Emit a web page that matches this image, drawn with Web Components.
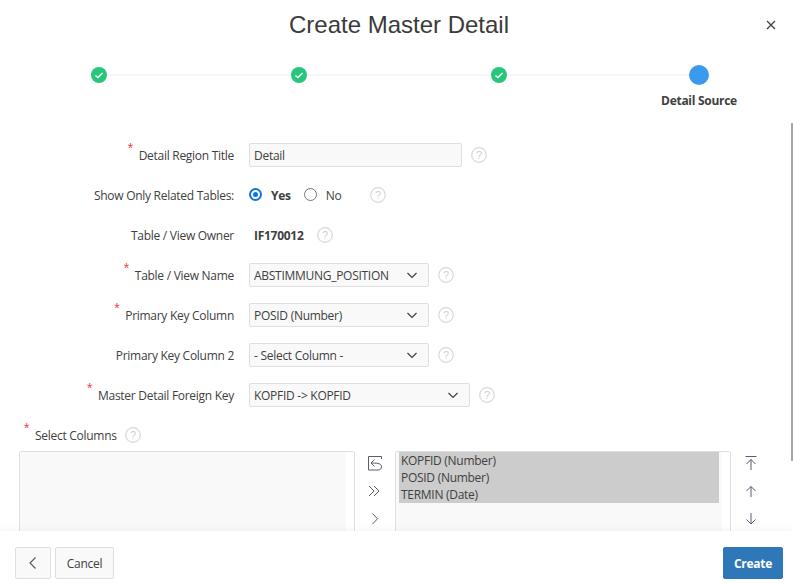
<!DOCTYPE html>
<html><head><meta charset="utf-8"><style>
html,body{margin:0;padding:0;background:#fff;height:100%;overflow:hidden}
body{font-family:"Open Sans","Noto Sans",sans-serif;color:#404040;letter-spacing:-.28px}
</style></head><body>
<wizard-dialog>
<wizard-header></wizard-header>
<form-row label="Detail Region Title" req="1" help="473"><text-box value="Detail"></text-box></form-row>
<form-row label="Show Only Related Tables:" ><radio-pair></radio-pair></form-row>
<form-row label="Table / View Owner" help="1"><b style="font-size:12px;color:#404040;padding-left:5px;margin-right:4px">IF170012</b></form-row>
<form-row label="Table / View Name" req="1" help="1"><select-box value="ABSTIMMUNG_POSITION" w="180"></select-box></form-row>
<form-row label="Primary Key Column" req="1" help="1"><select-box value="POSID (Number)" w="180"></select-box></form-row>
<form-row label="Primary Key Column 2" help="1"><select-box value="- Select Column -" w="180"></select-box></form-row>
<form-row label="Master Detail Foreign Key" req="1" help="1"><select-box value="KOPFID -&gt; KOPFID" w="221"></select-box></form-row>
<shuttle-field></shuttle-field>
<wizard-footer></wizard-footer>
</wizard-dialog>
<script>
const def=(n,html)=>{customElements.define(n,class extends HTMLElement{
 connectedCallback(){if(this.shadowRoot)return;const r=this.attachShadow({mode:'open'});r.innerHTML=html(this);}
});};
const helpIcon=`<svg width="16" height="16" viewBox="0 0 16 16" style="display:block"><circle cx="8" cy="8" r="7.3" fill="#fff" stroke="#d8d8d8" stroke-width="1.2"/><text x="8" y="12" text-anchor="middle" font-family="Liberation Sans" font-size="11" fill="#cfcfcf" letter-spacing="0">?</text></svg>`;
const chev=`<svg width="12" height="7" viewBox="0 0 12 7" style="display:block"><path d="M1.5 1l4.5 4.5L10.5 1" fill="none" stroke="#404040" stroke-width="1.2"/></svg>`;
const check=`<svg width="16" height="16" viewBox="0 0 16 16" style="display:block"><circle cx="8" cy="8" r="8" fill="#26c77a"/><path d="M4.4 8.5l2.4 2L11.6 6" fill="none" stroke="#fff" stroke-width="1.4"/></svg>`;
def('wizard-dialog',()=>`<style>
:host{display:flex;flex-direction:column;height:583px;width:793px;position:relative;overflow:hidden}
.bar{position:absolute;right:0;top:123px;width:2px;height:338px;background:#a6a6a6}
</style><slot></slot><div class="bar"></div>`);
def('wizard-header',()=>`<style>
:host{display:block;height:135px;position:relative;flex:none}
h1{margin:0;padding:10px 0 0 5px;height:30px;font:24px/30px "Liberation Sans",sans-serif;letter-spacing:0;color:#3b3b3b;text-align:center}
.x{position:absolute;left:765px;top:19px}
.w{display:grid;grid-template-columns:200px 200px 198px 20px;align-items:center;margin:25px 84px 0 91px;height:20px;background:linear-gradient(#f6f6f6,#f6f6f6) center/100% 2px no-repeat}
.cur{width:20px;height:20px;border-radius:50%;background:#3b9aef}
.lab{position:absolute;left:599px;width:200px;top:94px;text-align:center;font-size:12px;font-weight:700;color:#404040;line-height:14px}
</style><h1>Create Master Detail</h1>
<svg class="x" width="12" height="12" viewBox="0 0 12 12"><path d="M2 2l8 8M10 2l-8 8" stroke="#404040" stroke-width="1.3"/></svg>
<div class="w">${check}${check}${check}<div class="cur"></div></div>
<div class="lab">Detail Source</div>`);
def('form-row',h=>`<style>
:host{display:grid;grid-template-columns:234px auto auto 1fr;align-items:center;height:40px;flex:none}
.l{justify-self:end;font-size:12px;color:#404040;position:relative;white-space:nowrap}
.s{position:absolute;left:-11px;top:-6px;color:#f0414a;font:14px/14px "Liberation Sans",sans-serif}
.c{margin-left:15px;display:flex;align-items:center}
.h{margin-left:9px}
</style><div class="l">${h.hasAttribute('req')?'<span class="s">*</span>':''}${h.getAttribute('label')}</div>
<div class="c"><slot></slot></div>
<div class="h">${h.hasAttribute('help')?helpIcon:''}</div>`);
def('text-box',h=>`<style>
:host{display:block;width:213px;height:24px;box-sizing:border-box;border:1px solid #dfdfdf;border-radius:2px;background:#f9f9f9;font-size:12px;line-height:23px;padding-left:4px;color:#404040}
</style>${h.getAttribute('value')}`);
def('select-box',h=>`<style>
:host{display:flex;align-items:center;justify-content:space-between;width:${h.getAttribute('w')}px;height:24px;box-sizing:border-box;border:1px solid #dfdfdf;border-radius:2px;background:#f9f9f9;font-size:12px;padding:0 10px 0 4px;color:#404040;white-space:nowrap}
</style><span>${h.getAttribute('value')}</span>${chev}`);
def('radio-pair',()=>`<style>
:host{display:flex;align-items:center;font-size:12px;color:#404040}
.on,.off{display:block;width:13px;height:13px;box-sizing:border-box;border-radius:50%;margin-top:-2px}
.on{border:2px solid #0b75e6;padding:2px;background:#fff}
.on i{display:block;width:5px;height:5px;border-radius:50%;background:#0b75e6}
.off{border:1px solid #767676;margin-left:13px;background:#fff}
b{margin-left:9px}span.t{margin-left:9px}
svg{margin-left:29px}
</style><span class="on"><i></i></span><b>Yes</b><span class="off"></span><span class="t">No</span>${helpIcon}`);
const ic=p=>`<svg width="18" height="18" viewBox="0 0 18 18" style="display:block"><g fill="none" stroke="#5a5a6a" stroke-width="1">${p}</g></svg>`;
def('shuttle-field',()=>`<style>
:host{display:block;flex:none;padding:0 0 0 19px;position:relative}
.t{box-sizing:border-box;font-size:12px;color:#404040;height:36px;padding-top:4px;display:flex;align-items:center;padding-left:16px;position:relative}
.s{position:absolute;left:5px;top:6px;color:#f0414a;font:14px/14px "Liberation Sans",sans-serif}
.t svg{margin-left:8px}
.g{display:grid;grid-template-columns:336px 40px 336px 40px}
.box{border:1px solid #dfdfdf;border-radius:2px;background:#fff;box-sizing:border-box;height:120px;padding-right:8px}
.in{background:#f9f9f9;height:100%}
.mid{display:flex;flex-direction:column;align-items:center;padding-top:3px;gap:10px}
.sel{background:#ccc;font-size:12px;line-height:17px;padding:0 0 0 2px;margin:0 3px 0 3px;color:#404040;height:51px}
</style><div class="t"><span class="s">*</span>Select Columns${helpIcon}</div>
<div class="g"><div class="box"><div class="in"></div></div>
<div class="mid">
${ic('<path d="M15.5 5V2.5H2.5V16H12C14.5 16 15.5 14.5 15.5 12.8C15.5 10 13 9 5.5 9M8.5 5.5L5 9l3.5 3.5"/>')}
${ic('<path d="M3 4l5 5-5 5M8 4l5 5-5 5"/>')}
${ic('<path d="M6.5 3.5l5 5.3-5 5.2"/>')}
</div>
<div class="box"><div class="in"><div class="sel"><div>KOPFID (Number)</div><div>POSID (Number)</div><div>TERMIN (Date)</div></div></div></div>
<div class="mid">
${ic('<path d="M3.5 2.5h11M9 16V5.5M4.5 10L9 5.5l4.5 4.5"/>')}
${ic('<path d="M9 15V4.5M4.5 9L9 4.5 13.5 9"/>')}
${ic('<path d="M9 3v11M4.5 9.5L9 14l4.5-4.5"/>')}
</div></div>`);
def('wizard-footer',()=>`<style>
:host{position:absolute;left:0;right:0;top:531px;height:52px;background:#fff;box-shadow:0 -3px 6px rgba(0,0,0,.03);display:flex;align-items:flex-start;padding:16px 10px 0 15px;box-sizing:border-box;font-size:12px}
.b{height:32px;box-sizing:border-box;border:1px solid #dfdfdf;border-radius:2px;background:#f9f9f9;display:flex;align-items:center;justify-content:center;color:#404040}
.back{width:36px}.cancel{width:59px;margin-left:4px}
.create{margin-left:auto;width:60px;background:#2e78b9;border-color:#2e78b9;color:#fff;font-weight:700}
</style><div class="b back"><svg width="10" height="14" viewBox="0 0 10 14"><path d="M7.5 1.5L2 7l5.5 5.5" fill="none" stroke="#555" stroke-width="1.1"/></svg></div><div class="b cancel">Cancel</div><div class="b create">Create</div>`);
</script></body></html>
